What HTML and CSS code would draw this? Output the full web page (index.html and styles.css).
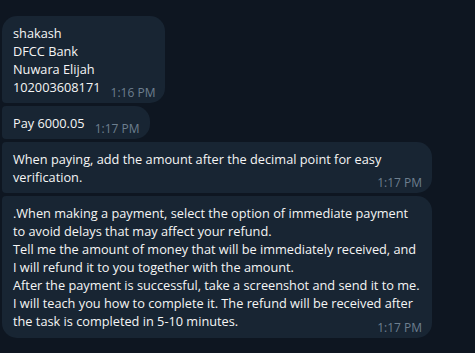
FILE: index.html
```html
<!DOCTYPE html>
<html>
<head>
<meta charset="utf-8">
<link rel="stylesheet" href="styles.css">
</head>
<body>
<div class="chat">
  <div class="bubble first">
    <div class="text">shakash<br>DFCC Bank<br>Nuwara Elijah<br>102003608171<span class="spacer"></span></div>
    <span class="time">1:16 PM</span>
  </div>
  <div class="bubble">
    <div class="text">Pay 6000.05<span class="spacer"></span></div>
    <span class="time">1:17 PM</span>
  </div>
  <div class="bubble">
    <div class="text">When paying, add the amount after the decimal point for easy verification.<span class="spacer"></span></div>
    <span class="time">1:17 PM</span>
  </div>
  <div class="bubble last">
    <div class="text">.When making a payment, select the option of immediate payment to avoid delays that may affect your refund.<br>Tell me the amount of money that will be immediately received, and I will refund it to you together with the amount.<br>After the payment is successful, take a screenshot and send it to me. I will teach you how to complete it. The refund will be received after the task is completed in 5-10 minutes.<span class="spacer"></span></div>
    <span class="time">1:17 PM</span>
  </div>
</div>
</body>
</html>
```

FILE: styles.css
```css
html, body {
  margin: 0;
  padding: 0;
  background: #0e1621;
}
body {
  width: 475px;
  height: 353px;
  overflow: hidden;
  font-family: "Open Sans", "DejaVu Sans", sans-serif;
  font-size: 12.75px;
  color: #f5f5f5;
}
.chat {
  display: flex;
  flex-direction: column;
  align-items: flex-start;
  gap: 3px;
  padding: 16px 0 0 2px;
}
.bubble {
  position: relative;
  background: #182533;
  border-radius: 4px 15px 15px 4px;
  padding: 8px 10px 7px 11px;
  max-width: 409px;
}
.bubble.first {
  border-top-left-radius: 15px;
}
.bubble.last {
  border-bottom-left-radius: 15px;
  padding-bottom: 8px;
}
.text {
  line-height: 18px;
}
.spacer {
  display: inline-block;
  width: 55px;
  height: 1px;
}
.time {
  position: absolute;
  right: 10px;
  bottom: 4px;
  font-size: 12px;
  line-height: 12px;
  color: #6d7f8f;
  white-space: nowrap;
}
```
